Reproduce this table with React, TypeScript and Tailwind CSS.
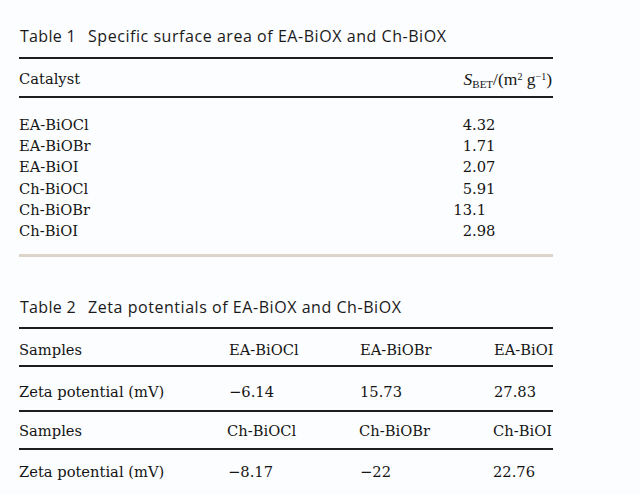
import React from "react";

const serif = { fontFamily: '"DejaVu Serif", serif' };

function Num({ v }: { v: string }) {
  const [i, f] = v.split(".");
  return (
    <div className="flex">
      <span className="w-[29px] text-right">{i}</span>
      <span>.{f}</span>
    </div>
  );
}

const rows1: [string, string][] = [
  ["EA-BiOCl", "4.32"],
  ["EA-BiOBr", "1.71"],
  ["EA-BiOI", "2.07"],
  ["Ch-BiOCl", "5.91"],
  ["Ch-BiOBr", "13.1"],
  ["Ch-BiOI", "2.98"],
];

function Caption({ n, text, cls }: { n: string; text: string; cls: string }) {
  return (
    <div
      className={`flex text-[16px] leading-[24px] text-[#1a1a1a] ${cls}`}
      style={{ fontFamily: '"Open Sans", sans-serif' }}
    >
      <span className="font-medium w-[68px] ml-[1px] tracking-[0.3px]">Table {n}</span>
      <span className="tracking-[0.55px]">{text}</span>
    </div>
  );
}

function Rule({ cls }: { cls: string }) {
  return <div className={`h-[2px] bg-[#1e1e1e] ${cls}`} />;
}

const grid = "grid grid-cols-[210px_131px_134px_59px] whitespace-nowrap";

export default function App() {
  return (
    <div className="w-[640px] h-[494px] bg-[#fcfdfe] pl-[19px] overflow-hidden">
      <div className="w-[534px]">
        <Caption n="1" text="Specific surface area of EA-BiOX and Ch-BiOX" cls="pt-[24px]" />
        <Rule cls="mt-[9px]" />
        <div
          className="mt-[10px] flex justify-between text-[14.7px] leading-[20px] text-[#151515]"
          style={serif}
        >
          <span>Catalyst</span>
          <span className="pr-[1px]" style={{ fontFamily: '"Liberation Serif", serif', fontSize: "17.5px" }}>
            <i>S</i>
            <span className="text-[11px] relative top-[3px]">BET</span>/(m
            <sup className="text-[10px]">2</sup> g
            <sup className="text-[10px]">−1</sup>)
          </span>
        </div>
        <Rule cls="mt-[5px]" />
        <div className="mt-[16px] text-[14.7px] leading-[21.2px] text-[#151515]" style={serif}>
          {rows1.map(([a, b]) => (
            <div key={a} className="flex">
              <span className="w-[424px]">{a}</span>
              <Num v={b} />
            </div>
          ))}
        </div>
        <div className="mt-[13px] h-[3px] bg-[#ddd5c9]" />

        <Caption n="2" text="Zeta potentials of EA-BiOX and Ch-BiOX" cls="mt-[38px]" />
        <Rule cls="mt-[8px]" />
        <div className="text-[14.7px] leading-[20px] text-[#151515]" style={serif}>
          <div className={`${grid} pt-[11px] pb-[5px]`}>
            <span>Samples</span>
            <span>EA-BiOCl</span>
            <span>EA-BiOBr</span>
            <span>EA-BiOI</span>
          </div>
          <Rule cls="" />
          <div className={`${grid} pt-[15px] pb-[8px]`}>
            <span>Zeta potential (mV)</span>
            <span>−6.14</span>
            <span>15.73</span>
            <span>27.83</span>
          </div>
          <Rule cls="" />
          <div className={`${grid} pt-[9px] pb-[7px]`}>
            <span>Samples</span>
            <span className="-ml-[2px]">Ch-BiOCl</span>
            <span className="-ml-[1px]">Ch-BiOBr</span>
            <span className="-ml-[1px]">Ch-BiOI</span>
          </div>
          <Rule cls="" />
          <div className={`${grid} pt-[12px]`}>
            <span>Zeta potential (mV)</span>
            <span className="-ml-[1px]">−8.17</span>
            <span>−22</span>
            <span className="-ml-[1px]">22.76</span>
          </div>
        </div>
      </div>
    </div>
  );
}
